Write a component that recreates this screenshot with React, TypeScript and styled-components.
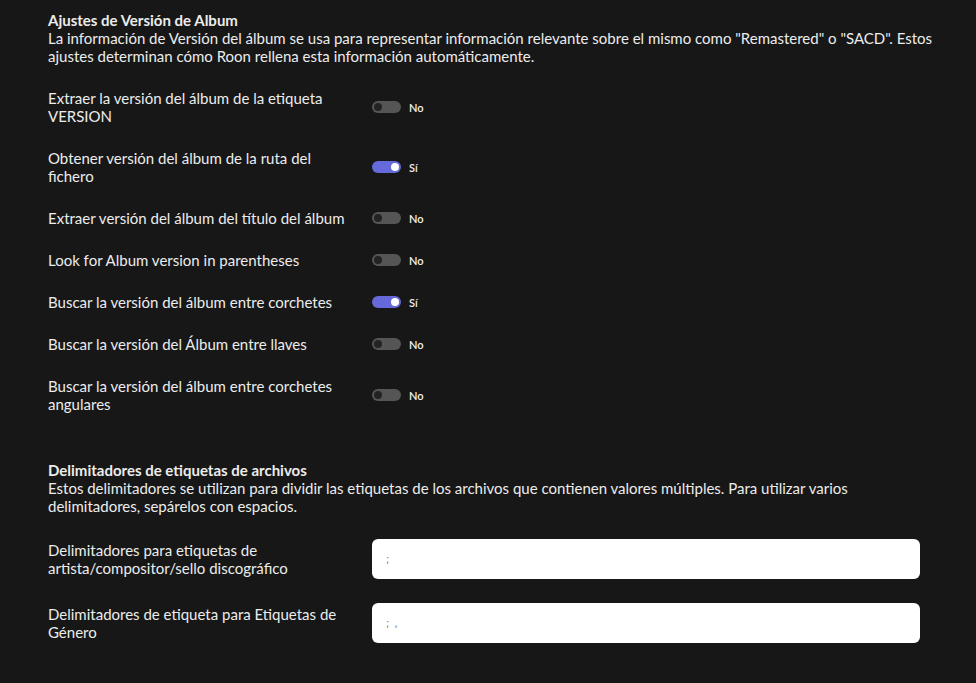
import React from "react";
import styled, { createGlobalStyle } from "styled-components";

const Global = createGlobalStyle`
  html, body { margin: 0; padding: 0; background: #171717; }
  body { font-family: Lato, "Noto Sans", sans-serif; color: #ececec; }
`;

const Page = styled.div`
  padding: 11px 40px 40px 48px;
  display: flex;
  flex-direction: column;
  gap: 48px;
`;

const Section = styled.section`
  display: flex;
  flex-direction: column;
  gap: 24px;
`;

const Header = styled.div`
  font-size: 15px;
  line-height: 18px;
`;

const Title = styled.div`
  font-weight: 700;
`;

const Desc = styled.div`
  font-weight: 400;
`;

const Row = styled.div`
  display: grid;
  grid-template-columns: 324px 1fr;
  align-items: center;
`;

const Label = styled.div`
  font-size: 15px;
  line-height: 18px;
  max-width: 306px;
`;

const ToggleWrap = styled.div`
  display: flex;
  align-items: center;
  gap: 8px;
`;

const Track = styled.div<{ $on: boolean }>`
  width: 29px;
  height: 12px;
  border-radius: 6px;
  background: ${(p) => (p.$on ? "#6669d9" : "#555555")};
  display: flex;
  align-items: center;
  justify-content: ${(p) => (p.$on ? "flex-end" : "flex-start")};
  padding: 0 2px;
  box-sizing: border-box;
`;

const Knob = styled.div<{ $on: boolean }>`
  width: 8px;
  height: 8px;
  border-radius: 50%;
  background: ${(p) => (p.$on ? "#ffffff" : "#232323")};
`;

const State = styled.span`
  font-size: 11px;
  font-weight: 600;
  color: #f2f2f2;
`;

const Input = styled.div`
  height: 40px;
  margin-right: 16px;
  background: #ffffff;
  border-radius: 6px;
  display: flex;
  align-items: center;
  padding-left: 14px;
  font-size: 10px;
  color: #777;
  font-family: "DejaVu Sans", sans-serif;
  letter-spacing: 1px;
`;

const toggles: [string, boolean][] = [
  ["Extraer la versión del álbum de la etiqueta VERSION", false],
  ["Obtener versión del álbum de la ruta del fichero", true],
  ["Extraer versión del álbum del título del álbum", false],
  ["Look for Album version in parentheses", false],
  ["Buscar la versión del álbum entre corchetes", true],
  ["Buscar la versión del Álbum entre llaves", false],
  ["Buscar la versión del álbum entre corchetes angulares", false],
];

export default function App() {
  return (
    <>
      <Global />
      <Page>
        <Section>
          <Header>
            <Title>Ajustes de Versión de Album</Title>
            <Desc>
              La información de Versión del álbum se usa para representar información relevante sobre el mismo como "Remastered" o "SACD". Estos ajustes determinan cómo Roon rellena esta información automáticamente.
            </Desc>
          </Header>
          {toggles.map(([label, on]) => (
            <Row key={label}>
              <Label>{label}</Label>
              <ToggleWrap>
                <Track $on={on}>
                  <Knob $on={on} />
                </Track>
                <State>{on ? "Sí" : "No"}</State>
              </ToggleWrap>
            </Row>
          ))}
        </Section>
        <Section>
          <Header>
            <Title>Delimitadores de etiquetas de archivos</Title>
            <Desc>
              Estos delimitadores se utilizan para dividir las etiquetas de los archivos que contienen valores múltiples. Para utilizar varios delimitadores, sepárelos con espacios.
            </Desc>
          </Header>
          <Row>
            <Label>Delimitadores para etiquetas de artista/compositor/sello discográfico</Label>
            <Input>;</Input>
          </Row>
          <Row>
            <Label>Delimitadores de etiqueta para Etiquetas de Género</Label>
            <Input>; ,</Input>
          </Row>
        </Section>
      </Page>
    </>
  );
}
